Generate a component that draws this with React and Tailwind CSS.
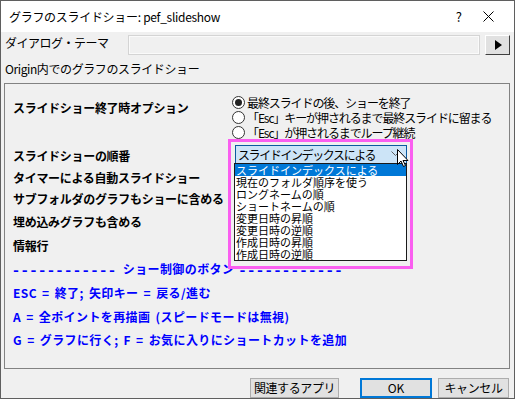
import React from 'react';

const jp = { fontFamily: '"Noto Sans CJK JP", "Noto Sans", sans-serif' };

const Radio = ({ checked, label }) => (
  <div className="flex items-center h-[15px]">
    <span className="w-[13px] h-[13px] rounded-full border border-[#333] bg-white flex items-center justify-center">
      {checked && <span className="w-[7px] h-[7px] rounded-full bg-[#222]" />}
    </span>
    <span className="ml-[2px] text-[12px] leading-[15px] tracking-[-1.1px] text-black whitespace-nowrap">{label}</span>
  </div>
);

const Label = ({ children }) => (
  <span className="text-[12px] leading-[15px] font-bold text-black tracking-[-0.3px]">{children}</span>
);

const Blue = ({ children, h }) => (
  <div className={`flex items-center ${h} text-[12px] font-bold text-[#0000ff] tracking-[0.4px] [word-spacing:2px] whitespace-pre`}>
    {children}
  </div>
);

const Dashes = () => (
  <span className="text-[16px] leading-[12px] tracking-[2.8px]">------------</span>
);

const orderItems = [
  'スライドインデックスによる',
  '現在のフォルダ順序を使う',
  'ロングネームの順',
  'ショートネームの順',
  '変更日時の昇順',
  '変更日時の逆順',
  '作成日時の昇順',
  '作成日時の逆順',
];

export default function App() {
  return (
    <div
      style={jp}
      className="relative w-[515px] h-[399px] bg-[#f0f0f0] border border-[#5f5f5f] overflow-hidden select-none"
    >
      {/* title bar */}
      <div className="h-[31px] bg-white flex items-center pl-[8px]">
        <span className="text-[12px] text-black tracking-[-0.3px]">グラフのスライドショー: pef_slideshow</span>
        <span className="ml-auto text-[13px] text-black mr-[21px]">?</span>
        <svg width="11" height="11" viewBox="0 0 11 11" className="mr-[20px]">
          <path d="M0.5 0.5 L10.5 10.5 M10.5 0.5 L0.5 10.5" stroke="#000" strokeWidth="1" />
        </svg>
      </div>

      {/* theme row */}
      <div className="flex items-start pt-[3px] pl-[4px] h-[25px]">
        <span className="w-[123px] text-[12px] leading-[16px] text-black tracking-[-0.5px]">ダイアログ・テーマ</span>
        <div className="w-[352px] h-[20px] border border-[#d4d4d4] bg-[#f0f0f0] shadow-[inset_0_0_0_1px_#fafafa]" />
        <div className="ml-[5px] w-[25px] h-[20px] bg-[#e1e1e1] border-t border-l border-[#fff] border-r-[#404040] border-b-[#404040] border-r border-b flex items-center justify-center">
          <svg width="8" height="10" viewBox="0 0 8 10">
            <path d="M1 0 L8 5 L1 10 Z" fill="#000" />
          </svg>
        </div>
      </div>

      <div className="pl-[4px] h-[24px] flex items-center text-[12px] text-black tracking-[-0.4px]">
        Origin内でのグラフのスライドショー
      </div>

      {/* group box */}
      <div className="ml-[3px] mt-[2px] w-[506px] h-[286px] border border-[#828282] pl-[8px] pt-[9px]">
        <div className="flex h-[48px]">
          <div className="w-[219px] pt-[1px]"><Label>スライドショー終了時オプション</Label></div>
          <div className="flex flex-col pt-[2px]">
            <Radio checked label="最終スライドの後、ショーを終了" />
            <Radio label="「Esc」キーが押されるまで最終スライドに留まる" />
            <Radio label="「Esc」が押されるまでループ継続" />
          </div>
        </div>

        <div className="flex items-center h-[20px] mt-[3px]">
          <div className="w-[219px]"><Label>スライドショーの順番</Label></div>
          <div className="ml-[3px] w-[172px] h-[19px] border border-[#0a5aa0] bg-[#cce4f7] flex items-center pl-[2px]">
            <span className="text-[12px] leading-[15px] text-black tracking-[-1.4px] whitespace-nowrap">スライドインデックスによる</span>
            <svg width="9" height="6" viewBox="0 0 9 6" className="ml-auto mr-[6px]">
              <path d="M0.5 0.5 L4.5 4.5 L8.5 0.5" stroke="#606060" fill="none" />
            </svg>
          </div>
        </div>

        <div className="flex items-center h-[21px] mt-[3px]"><Label>タイマーによる自動スライドショー</Label></div>
        <div className="flex items-center h-[21px]"><Label>サブフォルダのグラフもショーに含める</Label></div>
        <div className="flex items-center h-[24px]"><Label>埋め込みグラフも含める</Label></div>
        <div className="flex items-center h-[24px]"><Label>情報行</Label></div>
        <Blue h="h-[24px]">
          <Dashes /> ショー制御のボタン <Dashes />
        </Blue>
        <Blue h="h-[23px]">ESC = 終了; 矢印キー = 戻る/進む</Blue>
        <Blue h="h-[25px]">A = 全ポイントを再描画 (スピードモードは無視)</Blue>
        <Blue h="h-[22px]">G = グラフに行く; F = お気に入りにショートカットを追加</Blue>
      </div>

      {/* buttons */}
      <div className="flex justify-end mt-[9px] mr-[5px] gap-[6px]">
        <button className="w-[89px] h-[20px] bg-[#e1e1e1] border border-[#adadad] text-[12px] leading-[16px] text-black tracking-[-0.4px]">
          関連するアプリ
        </button>
        <button className="ml-[15px] w-[72px] h-[20px] bg-[#e1e1e1] border-2 border-[#0078d7] text-[12px] leading-[16px] text-black">
          OK
        </button>
        <button className="w-[71px] h-[20px] bg-[#e1e1e1] border border-[#adadad] text-[12px] leading-[16px] text-black tracking-[-0.4px]">
          キャンセル
        </button>
      </div>

      {/* open dropdown list */}
      <div className="absolute left-[233px] top-[162px] w-[173px] h-[98px] bg-white border border-[#1a1a1a]">
        {orderItems.map((t, i) => (
          <div
            key={t}
            className={`h-[12px] pl-[1px] text-[11px] leading-[12px] whitespace-nowrap ${
              i === 0 ? 'bg-[#0078d7] text-white' : 'text-black'
            }`}
          >
            {t}
          </div>
        ))}
      </div>

      {/* highlight annotation */}
      <div className="absolute left-[227px] top-[138px] w-[185px] h-[130px] border-[3px] border-[#fa5ef0] pointer-events-none" />

      {/* mouse cursor */}
      <svg width="12" height="19" viewBox="0 0 12 19" className="absolute left-[396px] top-[148px]">
        <path d="M0.5 0.5 L0.5 15.5 L4 12 L6.5 17.5 L8.5 16.5 L6 11.5 L11 11.5 Z" fill="#fff" stroke="#000" strokeWidth="1" strokeLinejoin="miter" />
      </svg>
    </div>
  );
}
